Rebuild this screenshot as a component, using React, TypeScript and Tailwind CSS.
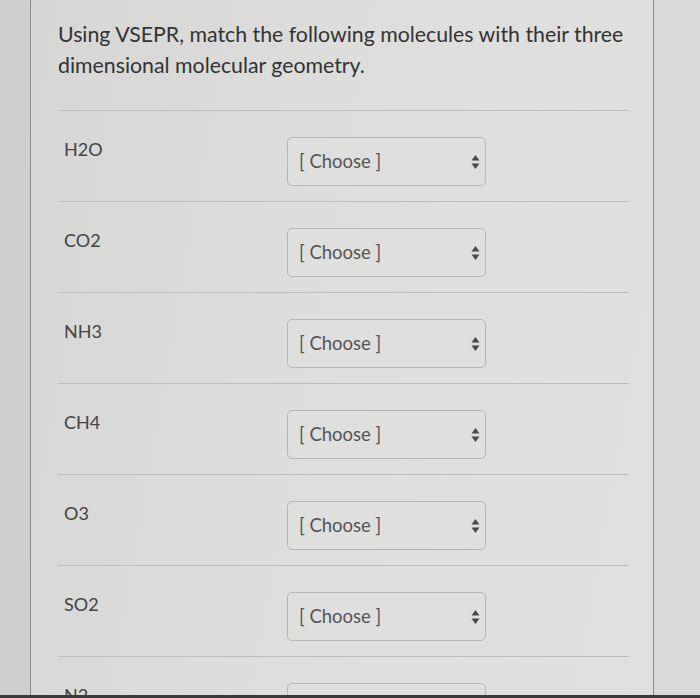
import React from 'react';

const molecules = ['H2O', 'CO2', 'NH3', 'CH4', 'O3', 'SO2', 'N2'];

const SelectArrows: React.FC = () => (
  <svg width="9" height="16" viewBox="0 0 9 16" className="text-[#4a4a4a]">
    <path d="M4.5 1 L8.5 6.5 L0.5 6.5 Z" fill="currentColor" />
    <path d="M4.5 15 L8.5 9.5 L0.5 9.5 Z" fill="currentColor" />
  </svg>
);

const MatchRow: React.FC<{ label: string }> = ({ label }) => (
  <div className="flex h-[91px] shrink-0 border-t border-[#bebebc]">
    <div className="w-[229px] pl-[6px] pt-[26px] text-[18px] leading-[24px] text-[#444]">{label}</div>
    <div className="mt-[26px] flex h-[49px] w-[199px] items-center justify-between rounded-[5px] border border-[#b6b6b4] bg-[#dfdfdd] pl-[11px] pr-[5px]">
      <span className="text-[18.5px] text-[#555]">[ Choose ]</span>
      <SelectArrows />
    </div>
  </div>
);

export default function App() {
  return (
    <div
      className="flex h-[698px] w-[700px] flex-col overflow-hidden bg-[#cfcfcd]"
      style={{ fontFamily: 'Lato, "Open Sans", sans-serif' }}
    >
      <div className="flex min-h-0 flex-1">
        <div className="ml-[30px] flex w-[624px] flex-col overflow-hidden border-x border-[#8c8c8a] bg-[linear-gradient(100deg,#d6d6d4,#dededc_50%,#e0e0de)] pl-[27px] pr-[24px]">
          <h1 className="pt-[19px] text-[21.3px] leading-[31px] text-[#333]">
            Using VSEPR, match the following molecules with their three dimensional molecular geometry.
          </h1>
          <div className="mt-[29px] flex flex-col">
            {molecules.map((m) => (
              <MatchRow key={m} label={m} />
            ))}
          </div>
        </div>
        <div className="flex-1 bg-[#d9d9d7]" />
      </div>
      <div className="h-[3px] bg-[#3a3a3a]" />
    </div>
  );
}
